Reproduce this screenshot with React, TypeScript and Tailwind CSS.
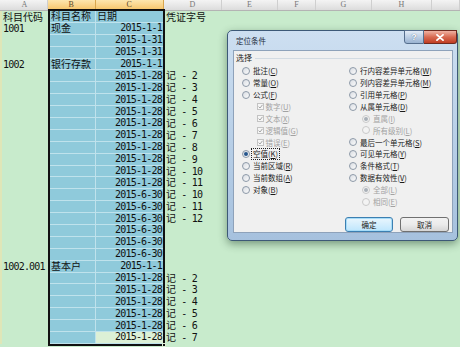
import clsx from 'clsx';

const cjk = "font-['Noto_Sans_CJK_SC',sans-serif]";
// sheet text: mono first so each cell keeps a short line box, CJK falls back to Noto
const sheet = "font-['DejaVu_Sans_Mono','Noto_Sans_CJK_SC',monospace]";
const num = 'tracking-[-0.8px]';

// sheet rows: A, B, C, D (D is the voucher number after 记)
type Row = [string, string, string, number | null];

const rows: Row[] = [
  ['1001', '现金', '2015-1-1', null],
  ['', '', '2015-1-31', null],
  ['', '', '2015-1-31', null],
  ['1002', '银行存款', '2015-1-1', null],
  ...[2, 3, 4, 5, 6, 7, 8, 9, 10, 11].map((n): Row => ['', '', '2015-1-28', n]),
  ...[10, 11, 12].map((n): Row => ['', '', '2015-6-30', n]),
  ...[0, 1, 2].map((): Row => ['', '', '2015-6-30', null]),
  ['1002.001', '基本户', '2015-1-1', null],
  ...[2, 3, 4, 5, 6, 7].map((n): Row => ['', '', '2015-1-28', n]),
];

const headers = [
  { l: 'A', w: 'w-[46px]' },
  { l: 'B', w: 'w-[47.5px]', sel: true },
  { l: 'C', w: 'w-[68.5px]', sel: true },
  { l: 'D', w: 'w-[58px]' },
  { l: 'E', w: 'w-[56px]' },
  { l: 'F', w: 'w-[38px]' },
  { l: 'G', w: 'w-[56px]' },
  { l: 'H', w: 'w-[60px]' },
  { l: '', w: 'flex-1' },
];

const left = [
  { t: '批注', k: 'C' },
  { t: '常量', k: 'O' },
  { t: '公式', k: 'F' },
  { t: '数字', k: 'U', sub: true },
  { t: '文本', k: 'X', sub: true },
  { t: '逻辑值', k: 'G', sub: true },
  { t: '错误', k: 'E', sub: true },
  { t: '空值', k: 'K', on: true },
  { t: '当前区域', k: 'R' },
  { t: '当前数组', k: 'A' },
  { t: '对象', k: 'B' },
];

const right = [
  { t: '行内容差异单元格', k: 'W' },
  { t: '列内容差异单元格', k: 'M' },
  { t: '引用单元格', k: 'P' },
  { t: '从属单元格', k: 'D' },
  { t: '直属', k: 'I', sub: true, on: true },
  { t: '所有级别', k: 'L', sub: true },
  { t: '最后一个单元格', k: 'S' },
  { t: '可见单元格', k: 'Y' },
  { t: '条件格式', k: 'T' },
  { t: '数据有效性', k: 'V' },
  { t: '全部', k: 'L', sub: true, on: true },
  { t: '相同', k: 'E', sub: true },
];

const Radio = ({ on, off }: { on?: boolean; off?: boolean }) => (
  <span
    className={clsx(
      'w-[8px] h-[8px] rounded-full border flex items-center justify-center shrink-0',
      off ? 'border-[#c9c9c9] bg-[#f3f3f3]' : 'border-[#8d99a8] bg-linear-to-br from-[#d9dde3] to-[#fbfbfb]'
    )}
  >
    {on && <span className={clsx('w-[4px] h-[4px] rounded-full', off ? 'bg-[#a9b0b8]' : 'bg-[#25558c]')} />}
  </span>
);

const Check = () => (
  <span className="w-[7px] h-[7px] border border-[#c3c3c3] bg-[#f6f6f6] flex items-center justify-center shrink-0">
    <svg width="5" height="5" viewBox="0 0 5 5">
      <path d="M0.6 2.6 L2 4 L4.5 0.8" fill="none" stroke="#a3a3a3" strokeWidth="1" />
    </svg>
  </span>
);

const Label = ({ t, k, off, focus }: { t: string; k: string; off?: boolean; focus?: boolean }) => (
  <span
    className={clsx(
      'whitespace-nowrap leading-none',
      off ? 'text-[#a2a2a2]' : 'text-[#1b1b1b]',
      focus && 'outline-1 outline-dotted outline-[#222] outline-offset-[1px]'
    )}
  >
    {t}(<span className="underline">{k}</span>)
  </span>
);

const Sheet = () => (
  <>
    {/* column headers */}
    <div className="flex h-[11px] border-b border-[#b4b4b4] bg-linear-to-b from-[#f4f4f4] to-[#dcdcdc]">
      <div className="w-[2px]" />
      {headers.map((h, i) => (
        <div
          key={i}
          className={clsx(
            h.w,
            'flex items-center justify-center border-r text-[8px] leading-none font-["Liberation_Serif",serif]',
            h.sel
              ? 'bg-linear-to-b from-[#fde6ae] to-[#f6c467] border-[#d9a64c] text-[#5b4a2a]'
              : 'border-[#cfcfcf] text-[#777]'
          )}
        >
          {h.l}
        </div>
      ))}
    </div>

    <div className={clsx('flex border-l-2 border-[#dfe6b8] text-[10px] text-[#111] leading-none', sheet)}>
      {/* column A */}
      <div className="w-[48px] shrink-0">
        <div className="h-[11.9px] flex items-center pl-px pt-[2px]">科目代码</div>
        {rows.map((r, i) => (
          <div key={i} className={clsx('h-[11.9px] flex items-center pl-px', num)}>
            {r[0]}
          </div>
        ))}
      </div>

      {/* selected range B:C */}
      <div className="relative z-10 w-[113px] shrink-0 ring-2 ring-[#111]">
        <div className="flex h-[11.9px] border-b border-[#bfe2ec] bg-[#8fcadb]">
          <div className="w-[46px] flex items-center pl-px pt-[2px] border-r border-[#bfe2ec]">科目名称</div>
          <div className="flex-1 flex items-center pl-px pt-[2px]">日期</div>
        </div>
        {rows.map((r, i) => (
          <div key={i} className="flex h-[11.9px] border-b border-[#bfe2ec] bg-[#8fcadb]">
            <div className="w-[46px] flex items-center pl-px pt-[2px] border-r border-[#bfe2ec]">{r[1]}</div>
            <div
              className={clsx(
                'flex-1 flex items-center justify-end pr-px',
                num,
                i === rows.length - 1 && 'bg-[#dcf0d6]'
              )}
            >
              {r[2]}
            </div>
          </div>
        ))}
        <div className="absolute -right-[3px] -bottom-[3px] w-[4px] h-[4px] bg-[#111] border border-[#dcf0d6]" />
      </div>

      {/* column D */}
      <div className="w-[59px] shrink-0 pl-[3px]">
        <div className="h-[11.9px] flex items-center pt-[2px]">凭证字号</div>
        {rows.map((r, i) => (
          <div key={i} className={clsx('h-[11.9px] flex items-center whitespace-pre', num)}>
            {r[3] !== null && (
              <>
                <span className="tracking-normal">记</span> - {r[3]}
              </>
            )}
          </div>
        ))}
      </div>
    </div>
  </>
);

const Dialog = () => (
  <div className="absolute left-[227px] top-[30px] w-[231px] h-[211px] rounded-[5px] border border-[#3d5977] bg-linear-to-b from-[#cddff1] to-[#a6c1de] shadow-[0_3px_8px_rgba(20,50,30,0.45)] flex flex-col">
    {/* title bar */}
    <div className="h-[19px] flex justify-between items-start">
      <div className={clsx('h-full flex items-center pl-[8px] pt-px text-[7.5px] text-[#1c2a3a]', cjk)}>定位条件</div>
      <div className="flex -mt-px">
        <div className="w-[20px] h-[14px] rounded-bl-[3px] border border-[#566f8e] bg-linear-to-b from-[#e3ecf6] via-[#bccfe5] to-[#9ab3d1] flex items-center justify-center text-[9px] font-bold text-white leading-none font-['Liberation_Sans',sans-serif] [text-shadow:0_0_1px_#34506f]">
          ?
        </div>
        <div className="w-[33px] h-[14px] rounded-br-[3px] border border-l-0 border-[#6e2a1f] bg-linear-to-b from-[#eeb2a3] via-[#d86a52] to-[#c03c22] flex items-center justify-center">
          <svg width="8" height="7" viewBox="0 0 8 7">
            <path d="M1 0.8 L7 6.2 M7 0.8 L1 6.2" stroke="#fff" strokeWidth="1.8" strokeLinecap="round" />
          </svg>
        </div>
      </div>
    </div>

    {/* client area */}
    <div className={clsx('flex-1 ml-[5px] mr-[4px] mb-[7px] border border-[#8ea2ba] bg-[#f0f0f0] flex flex-col text-[7.5px]', cjk)}>
      <div className="h-[12px] mt-px flex items-center pl-[2px] pr-[2px]">
        <span className="text-[8px] text-[#1b1b1b] leading-none">选择</span>
        <div className="flex-1 h-px ml-[3px] bg-[#d3dbe2]" />
      </div>

      <div className="flex mt-px">
        <div className="w-[115px] pl-[8px]">
          {left.map((o, i) => (
            <div key={i} className={clsx('h-[11.9px] flex items-center', o.sub ? 'pl-[15px] gap-[1.5px]' : 'gap-[3px]')}>
              {o.sub ? <Check /> : <Radio on={o.on} />}
              <Label t={o.t} k={o.k} off={o.sub} focus={o.on} />
            </div>
          ))}
        </div>
        <div className="flex-1">
          {right.map((o, i) => (
            <div key={i} className={clsx('h-[11.9px] flex items-center gap-[3px]', o.sub && 'pl-[13px]')}>
              <Radio on={o.on} off={o.sub} />
              <Label t={o.t} k={o.k} off={o.sub} />
            </div>
          ))}
        </div>
      </div>

      <div className="flex justify-end gap-[7px] pr-[3px] mt-[9px]">
        <div className="w-[48px] h-[15px] rounded-[3px] border border-[#3c7fb1] bg-linear-to-b from-[#eaf6fd] to-[#bee6fd] flex items-center justify-center text-[#1b1b1b] shadow-[inset_0_0_0_1px_#a6dcf8]">
          确定
        </div>
        <div className="w-[49px] h-[15px] rounded-[3px] border border-[#707070] bg-linear-to-b from-[#f2f2f2] via-[#ebebeb] to-[#d6d6d6] flex items-center justify-center text-[#1b1b1b]">
          取消
        </div>
      </div>
    </div>
  </div>
);

const App = () => {
  return (
    <div className="relative w-[460px] h-[347px] overflow-hidden bg-[#c8ebcc]">
      <Sheet />
      <Dialog />
    </div>
  );
};

export default App;
